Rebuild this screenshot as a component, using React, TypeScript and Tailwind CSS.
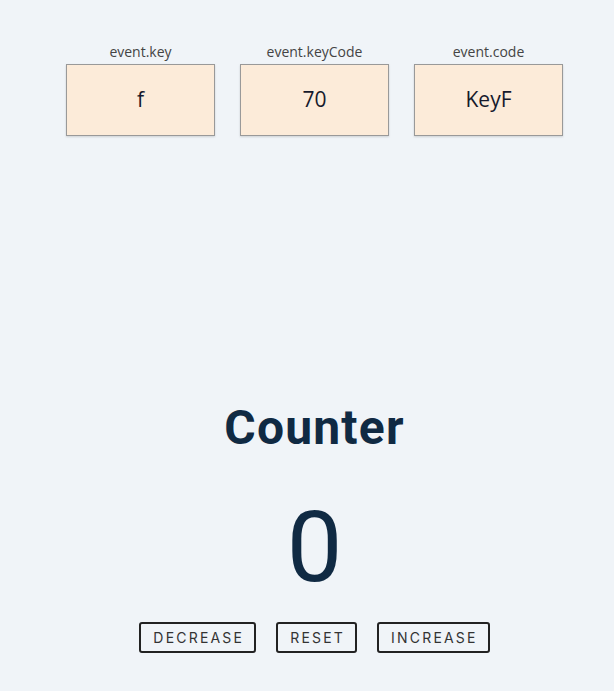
import React from "react";

const items = [
  { label: "event.key", value: "f" },
  { label: "event.keyCode", value: "70" },
  { label: "event.code", value: "KeyF" },
];

export default function App() {
  return (
    <div className="min-h-[691px] w-full bg-[#f0f4f8] pl-[15px]">
      <div className="flex justify-center gap-[25px] pt-[42px]">
        {items.map((it) => (
          <div key={it.label} className="flex flex-col items-center">
            <div className="text-[14px] leading-[20px] text-[#444] font-['Open_Sans',sans-serif]">
              {it.label}
            </div>
            <div className="mt-[2px] flex h-[72px] w-[149px] items-center justify-center border border-[#999] bg-[#fcebd9] text-[21px] font-medium text-[#161a2c] font-['Open_Sans',sans-serif] shadow-[0_1px_2px_rgba(0,0,0,0.15)]">
              {it.value}
            </div>
          </div>
        ))}
      </div>
      <div className="flex flex-col items-center pt-[265px] font-['Roboto',sans-serif] text-[#102a43]">
        <h1 className="text-[48px] font-bold leading-[54px] tracking-[1.2px]">Counter</h1>
        <div className="mt-[32px] text-[99px] leading-[120px]">0</div>
        <div className="mt-[15px] flex gap-[20px]">
          {["DECREASE", "RESET", "INCREASE"].map((b) => (
            <button
              key={b}
              className="h-[31px] rounded-[3px] border-2 border-[#222] bg-transparent pl-[12px] pr-[10px] text-[14px] font-normal tracking-[2.2px] text-[#333] font-['Inter',sans-serif]"
            >
              {b}
            </button>
          ))}
        </div>
      </div>
    </div>
  );
}
